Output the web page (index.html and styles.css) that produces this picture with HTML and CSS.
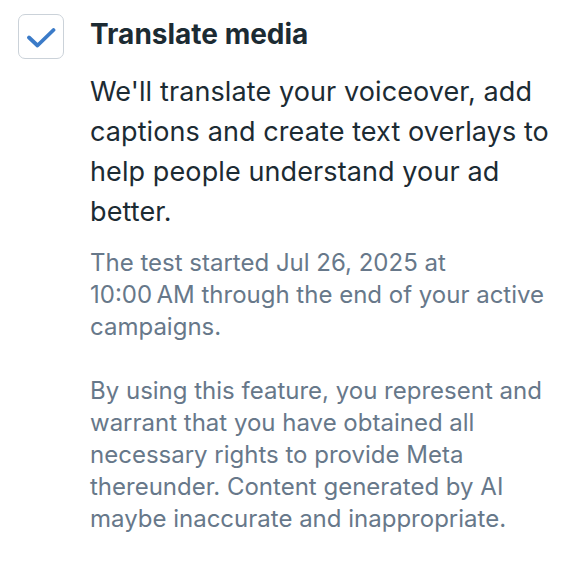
FILE: index.html
```html
<!DOCTYPE html>
<html>
<head>
<meta charset="utf-8">
<link rel="stylesheet" href="styles.css">
</head>
<body>
<div class="option">
  <div class="check">
    <svg width="30" height="30" viewBox="0 0 30 30"><path d="M3 15.5 L11.5 23.5 L27.5 8" fill="none" stroke="#3b7bc8" stroke-width="3.8" stroke-linecap="round" stroke-linejoin="round"/></svg>
  </div>
  <div class="content">
    <div class="title">Translate media</div>
    <p class="desc">We'll translate your voiceover, add captions and create text overlays to help people understand your ad better.</p>
    <p class="note">The test started Jul 26, 2025 at 10:00&#x202F;AM through the end of your active campaigns.</p>
    <p class="note legal">By using this feature, you represent and warrant that you have obtained all necessary rights to provide Meta thereunder. Content generated by AI maybe inaccurate and inappropriate.</p>
  </div>
</div>
</body>
</html>
```
FILE: styles.css
```css
html, body { margin: 0; padding: 0; background: #fff; }
body { font-family: Inter, "Noto Sans", sans-serif; color: #1c2b33; }
.option { display: flex; align-items: flex-start; padding: 14px 16px 0 18px; gap: 26px; }
.check {
  width: 44px; height: 43px; flex: none;
  border: 1.5px solid #cbd2d9; border-radius: 7px;
  display: flex; align-items: center; justify-content: center;
}
.content { flex: 1; padding-top: 2px; }
.title { font-size: 28px; font-weight: 700; line-height: 36px; }
.desc { margin: 20px 0 0; font-size: 27px; line-height: 40px; letter-spacing: 0.1px; }
.note { margin: 15px 0 0; font-size: 24px; line-height: 32px; color: #67788a; }
.legal { margin-top: 32px; }
```
